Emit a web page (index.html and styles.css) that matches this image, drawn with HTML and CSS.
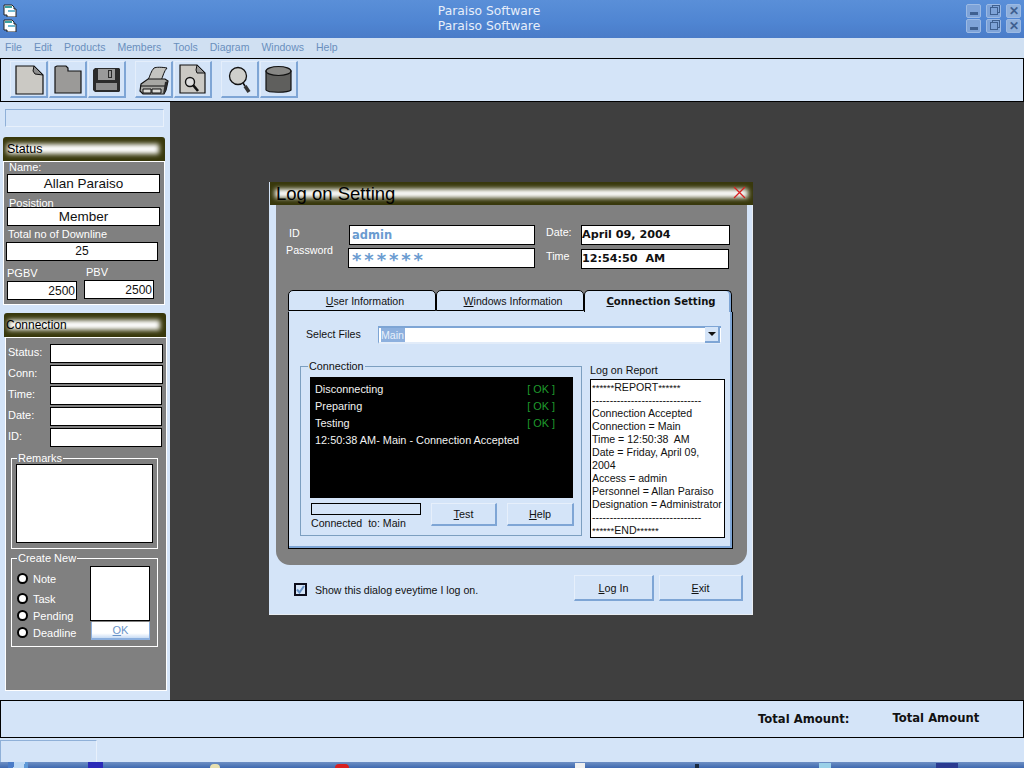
FILE: index.html
```html
<!DOCTYPE html>
<html lang="en">
<head>
  <meta charset="UTF-8" />
  <title>Paraiso Software</title>
  <link rel="stylesheet" href="styles.css">
</head>

<body>
  <!-- Title bars (main window + child window maximised) -->
  <div class="titlebars">
    <div class="titlebar">
      <svg class="app-icon" width="14" height="13" viewBox="0 0 14 13"><path d="M1 1h8l2 2v2h2v8H4v-2H1z" fill="#fff" stroke="#222"/><path d="M2 2h7v2H2z" fill="#3aa0a0"/><path d="M5 6h7v2H5z" fill="#70b8d0"/></svg>
      <span class="titlebar-text">Paraiso Software</span>
      <span class="win-btn"><span class="glyph-min"></span></span>
      <span class="win-btn"><span class="glyph-max"></span></span>
      <span class="win-btn glyph-close">✕</span>
    </div>
    <div class="titlebar">
      <svg class="app-icon" width="14" height="13" viewBox="0 0 14 13"><path d="M1 1h8l2 2v2h2v8H4v-2H1z" fill="#fff" stroke="#222"/><path d="M2 2h7v2H2z" fill="#3aa0a0"/><path d="M5 6h7v2H5z" fill="#70b8d0"/></svg>
      <span class="titlebar-text">Paraiso Software</span>
      <span class="win-btn"><span class="glyph-min"></span></span>
      <span class="win-btn"><span class="glyph-max"></span></span>
      <span class="win-btn glyph-close">✕</span>
    </div>
  </div>

  <div class="menubar">
    <span>File</span><span>Edit</span><span>Products</span><span>Members</span><span>Tools</span><span>Diagram</span><span>Windows</span><span>Help</span>
  </div>

  <div class="toolbar">
    <div class="tool">
      <svg width="38" height="35" viewBox="0 0 38 35"><path d="M6 5h18l9 9v19H6z" fill="#cbc9c4" stroke="#111" stroke-width="1.2"/><path d="M24 5l-1 5 2 3 8 1z" fill="#8d8d8d" stroke="#111"/></svg>
    </div>
    <div class="tool">
      <svg width="38" height="35" viewBox="0 0 38 35"><path d="M6 32V6l2-1h9l2 2v3h13v22z" fill="#9b9a98" stroke="#111" stroke-width="1.2"/></svg>
    </div>
    <div class="tool">
      <svg width="38" height="35" viewBox="0 0 38 35"><path d="M7 7h24l1 1v22l-1 1H7l-2-2V9z" fill="#2b2b2b"/><path d="M10 8h17v11H10z" fill="#9a9a9a"/><path d="M20 9h4v8h-4z" fill="#2b2b2b"/><path d="M21 10h2v6h-2z" fill="#9a9a9a"/><path d="M8 22h21v7H8z" fill="#8f8f8f"/></svg>
    </div>
    <div class="tool tool-sep">
      <svg width="38" height="35" viewBox="0 0 38 35"><path d="M13 19c2-4 3-9 6-12 2-1 8-1 13 0-3 3-4 8-6 13z" fill="#c4c4c0" stroke="#111"/><path d="M6 23l7-5h17l3 2-2 9-2 4H8l-3-3z" fill="#a8a8a4" stroke="#111" stroke-width="1.2"/><path d="M5 25h26M8 28h8v4H8zM17 28h9v4h-9z" fill="#dcdcd8" stroke="#111"/><path d="M30 21l3-1-2 9-3 4z" fill="#2b2b2b"/></svg>
    </div>
    <div class="tool">
      <svg width="38" height="35" viewBox="0 0 38 35"><path d="M6 4h17l8 8v20H6z" fill="#cbc9c4" stroke="#111" stroke-width="1.2"/><path d="M23 4l-1 5 1 3 8 0z" fill="#9a9a9a" stroke="#111"/><circle cx="16" cy="21" r="4.5" fill="#dedede" stroke="#111" stroke-width="1.4"/><path d="M19 24l5 6" stroke="#111" stroke-width="2.6"/></svg>
    </div>
    <div class="tool tool-sep">
      <svg width="38" height="35" viewBox="0 0 38 35"><circle cx="17" cy="15" r="8.5" fill="#cfcfcb" stroke="#111" stroke-width="1.3"/><path d="M22 22l2 3" stroke="#111" stroke-width="1.6"/><path d="M24 25l4 6" stroke="#333" stroke-width="3.6"/></svg>
    </div>
    <div class="tool">
      <svg width="38" height="35" viewBox="0 0 38 35"><path d="M6 10v19c2 3 22 3 25 0V10z" fill="#5f5f5d" stroke="#111" stroke-width="1.2"/><ellipse cx="18.5" cy="10" rx="12.5" ry="4.5" fill="#878785" stroke="#111" stroke-width="1.2"/></svg>
    </div>
  </div>

  <div class="main">
    <aside class="sidebar">
      <div class="side-search"></div>

      <div class="cap status-cap"><span>Status</span></div>
      <div class="side-panel status-panel">
        <div class="lbl name-lbl">Name:</div>
        <div class="field name-field">Allan Paraiso</div>
        <div class="lbl pos-lbl">Posistion</div>
        <div class="field pos-field">Member</div>
        <div class="lbl down-lbl">Total no of Downline</div>
        <div class="field down-field">25</div>
        <div class="bv-row">
          <div class="bv-col">
            <div class="lbl">PGBV</div>
            <div class="field bv-field">2500</div>
          </div>
          <div class="bv-col bv-col-2">
            <div class="lbl">PBV</div>
            <div class="field bv-field">2500</div>
          </div>
        </div>
      </div>

      <div class="cap conn-cap"><span>Connection</span></div>
      <div class="side-panel conn-panel">
        <div class="conn-rows">
          <div class="conn-row"><span>Status:</span><div class="field"></div></div>
          <div class="conn-row"><span>Conn:</span><div class="field"></div></div>
          <div class="conn-row"><span>Time:</span><div class="field narrow"></div></div>
          <div class="conn-row"><span>Date:</span><div class="field narrow"></div></div>
          <div class="conn-row"><span>ID:</span><div class="field narrow"></div></div>
        </div>
        <fieldset class="side-group remarks">
          <legend>Remarks</legend>
          <div class="remarks-box"></div>
        </fieldset>
        <fieldset class="side-group create">
          <legend>Create New</legend>
          <div class="create-inner">
            <div class="radios">
              <div class="radio-row"><span class="radio"></span>Note</div>
              <div class="radio-row"><span class="radio"></span>Task</div>
              <div class="radio-row"><span class="radio"></span>Pending</div>
              <div class="radio-row"><span class="radio"></span>Deadline</div>
            </div>
            <div class="create-right">
              <div class="create-box"></div>
              <div class="ok-btn"><u>O</u>K</div>
            </div>
          </div>
        </fieldset>
      </div>
    </aside>

    <div class="workspace">
      <!-- Log on dialog floats on the MDI workspace -->
      <div class="dialog">
        <div class="cap dialog-cap">
          <span>Log on Setting</span>
          <svg class="dialog-x" width="13" height="13" viewBox="0 0 13 13"><path d="M1 1l11 11M12 1L1 12" stroke="#d82020" stroke-width="1.3" fill="none"/></svg>
        </div>
        <div class="dialog-grey">
          <div class="login-row">
            <div class="login-labels">
              <div class="id-lbl">ID</div>
              <div>Password</div>
            </div>
            <div class="login-fields">
              <div class="field login-field">admin</div>
              <div class="field login-field pass-field">******</div>
            </div>
            <div class="date-labels">
              <div>Date:</div>
              <div class="time-lbl">Time</div>
            </div>
            <div class="date-fields">
              <div class="field date-field">April 09, 2004</div>
              <div class="field date-field time-field">12:54:50&nbsp; AM</div>
            </div>
          </div>

          <div class="tabs">
            <div class="tab"><u>U</u>ser Information</div>
            <div class="tab"><u>W</u>indows Information</div>
            <div class="tab active"><u>C</u>onnection Setting</div>
          </div>
          <div class="tab-panel">
            <div class="select-row">
              <span class="select-lbl">Select Files</span>
              <div class="combo"><span class="combo-sel">Main</span><span class="combo-arrow"></span></div>
            </div>
            <div class="lower">
              <fieldset class="conn-group">
                <legend>Connection</legend>
                <div class="console">
                  <div class="console-line"><span>Disconnecting</span><span class="ok">[ OK ]</span></div>
                  <div class="console-line"><span>Preparing</span><span class="ok">[ OK ]</span></div>
                  <div class="console-line"><span>Testing</span><span class="ok">[ OK ]</span></div>
                  <div class="console-line"><span>12:50:38 AM- Main - Connection Accepted</span></div>
                </div>
                <div class="conn-foot">
                  <div class="progress-col">
                    <div class="progress"></div>
                    <div class="progress-text">Connected&nbsp; to: Main</div>
                  </div>
                  <div class="btn test-btn"><span><u>T</u>est</span></div>
                  <div class="btn help-btn"><span><u>H</u>elp</span></div>
                </div>
              </fieldset>
              <div class="report-col">
                <div class="report-lbl">Log on Report</div>
                <div class="report">
                  <div><small>******</small>REPORT<small>******</small></div>
                  <div>-------------------------------</div>
                  <div>Connection Accepted</div>
                  <div>Connection = Main</div>
                  <div>Time = 12:50:38&nbsp; AM</div>
                  <div>Date = Friday, April 09, 2004</div>
                  <div>Access = admin</div>
                  <div>Personnel = Allan Paraiso</div>
                  <div>Designation = Administrator</div>
                  <div>-------------------------------</div>
                  <div><small>******</small>END<small>******</small></div>
                </div>
              </div>
            </div>
          </div>
        </div>
        <div class="dialog-foot">
          <span class="check"><svg width="9" height="9" viewBox="0 0 9 9"><path d="M1 4.5l2.5 3 4.5-6.5" fill="none" stroke="#6a94c8" stroke-width="2"/></svg></span>
          <span class="check-text">Show this dialog eveytime I log on.</span>
          <div class="btn login-btn"><span><u>L</u>og In</span></div>
          <div class="btn exit-btn"><span><u>E</u>xit</span></div>
        </div>
      </div>
    </div>
  </div>

  <div class="statusbar">
    <span class="total-lbl">Total Amount:</span>
    <span class="total-val">Total Amount</span>
  </div>

  <div class="bottom-strip"><div class="strip-box"></div></div>

  <!-- Only the top few pixels of the task bar are in view -->
  <div class="taskbar">
    <span class="start"></span>
    <span class="tray t1"></span>
    <span class="tray t2"></span>
    <span class="tray t3"></span>
    <span class="tray t4"></span>
    <span class="tray t5"></span>
    <span class="tray t6"></span>
    <span class="tray t7"></span>
  </div>
</body>
</html>
```

FILE: styles.css
```css
* {
  box-sizing: border-box;
}
body {
  margin: 0;
  width: 1024px;
  height: 768px;
  overflow: hidden;
  font-family: "Liberation Sans", Arial, sans-serif;
  font-size: 12px;
  color: #111;
  background: #d4e4f8;
}

/* title bars */
.titlebars {
  height: 38px;
  padding-top: 3px;
  background: linear-gradient(#5a8fd8, #4f85d2 60%, #4a7cc8);
}
.titlebar {
  display: flex;
  align-items: center;
  height: 15px;
  padding-left: 3px;
  padding-right: 3px;
}
.app-icon {
  flex: none;
}
.titlebar-text {
  flex: 1;
  text-align: center;
  font-family: "DejaVu Sans", sans-serif;
  font-size: 12.3px;
  color: #e6eefa;
}
.win-btn {
  display: flex;
  align-items: center;
  justify-content: center;
  width: 15px;
  height: 14px;
  margin-left: 5px;
  background: #7ea3d8;
  border: 1px solid #9cbae4;
  border-radius: 2px;
  color: #3f6090;
  font-size: 12px;
  font-weight: bold;
}
.glyph-min {
  width: 8px;
  height: 3px;
  margin-top: 6px;
  background: #3f6090;
}
.glyph-max {
  width: 8px;
  height: 8px;
  border: 1px solid #3f6090;
  box-shadow: 2px -2px 0 -1px #7ea3d8, 2px -2px 0 0 #3f6090;
}
.glyph-close {
  background: #8fb0dc;
}

/* menu + toolbar */
.menubar {
  display: flex;
  gap: 12px;
  height: 20px;
  padding: 2px 0 0 5px;
  font-size: 10.5px;
  line-height: 14px;
  color: #6a8fbd;
  background: #d0e0f2;
}
.toolbar {
  display: flex;
  height: 44px;
  padding: 2px 0 0 9px;
  gap: 1px;
  background: #d4e4f8;
  border: 1px solid #000;
}
.tool {
  width: 38px;
  height: 37px;
  border-right: 2px solid #7ea5d5;
  border-bottom: 2px solid #7ea5d5;
  border-top: 1px solid #e4eefb;
  border-left: 1px solid #e4eefb;
}
.tool svg {
  display: block;
  margin: -1px 0 0 -1px;
}
.tool-sep {
  margin-left: 8px;
}

/* main area */
.main {
  display: flex;
  height: 598px;
}
.sidebar {
  width: 170px;
  flex: none;
  padding: 7px 0 0 3px;
  background: #d4e4f8;
}
.side-search {
  width: 159px;
  height: 18px;
  margin-left: 2px;
  border-top: 1px solid #8fb0d8;
  border-left: 1px solid #8fb0d8;
  border-right: 1px solid #e8f0fb;
  border-bottom: 1px solid #e8f0fb;
}
.workspace {
  flex: 1;
  position: relative;
  background: #3f3f3f;
}

/* olive caption with the white glow in the middle */
.cap {
  position: relative;
  display: flex;
  align-items: center;
  background: #38380c;
  color: #000;
  border-radius: 3px 3px 0 0;
}
.cap::before {
  content: "";
  position: absolute;
  top: 7px;
  bottom: 7px;
  left: 4px;
  right: 6px;
  background: #fff;
  filter: blur(2.5px);
}
.cap span,
.cap svg {
  position: relative;
}
.status-cap {
  width: 162px;
  height: 24px;
  margin-top: 10px;
  padding-left: 4px;
  font-size: 12.5px;
}
.conn-cap {
  width: 162px;
  height: 24px;
  margin: 8px 0 0 1px;
  padding-left: 2px;
  font-size: 12px;
}
.side-panel {
  background: #808080;
  border: 1px solid #fff;
  color: #fff;
  font-size: 11px;
}
.status-panel {
  width: 162px;
  height: 144px;
}
.lbl {
  height: 12px;
  line-height: 12px;
  margin-left: 5px;
}
.name-lbl {
  line-height: 10px;
}
.field {
  height: 19px;
  background: #fff;
  border: 1px solid #000;
  color: #111;
}
.name-field,
.pos-field,
.down-field {
  margin-left: 3px;
  width: 153px;
  text-align: center;
  font-size: 13.5px;
  line-height: 17px;
}
.pos-lbl {
  margin-top: 4px;
}
.pos-field {
  margin-top: -2px;
}
.down-lbl {
  margin-top: 2px;
  margin-left: 4px;
}
.down-field {
  margin: 2px 0 0 2px;
  width: 152px;
  font-size: 12px;
}
.bv-row {
  display: flex;
  margin-top: 5px;
}
.bv-col {
  width: 70px;
  margin-left: 3px;
}
.bv-col .lbl {
  margin: 0 0 3px 0;
  line-height: 14px;
}
.bv-col-2 {
  margin-left: 7px;
  margin-top: -1px;
}
.bv-col-2 .lbl {
  margin-left: 2px;
}
.bv-field {
  text-align: right;
  padding-right: 1px;
  font-size: 12px;
  line-height: 18px;
}

/* connection panel */
.conn-panel {
  width: 162px;
  height: 354px;
  margin-left: 2px;
}
.conn-rows {
  display: flex;
  flex-direction: column;
  gap: 2px;
  padding: 6px 0 0 2px;
}
.conn-row {
  display: flex;
  align-items: center;
  font-size: 11px;
}
.conn-row span {
  width: 42px;
  margin-top: -3px;
}
.conn-row .field {
  width: 113px;
}
.conn-row .field.narrow {
  width: 112px;
}
.side-group {
  width: 147px;
  margin: 5px 0 0 5px;
  padding: 0 0 5px 4px;
  border: 1px solid #fff;
}
.side-group legend {
  height: 12px;
  padding: 0 1px;
  margin-left: 1px;
  line-height: 12px;
  font-size: 11px;
}
.remarks-box {
  width: 137px;
  height: 79px;
  background: #fff;
  border: 1px solid #000;
}
.create {
  height: 95px;
  margin-top: 3px;
}
.create-inner {
  display: flex;
}
.radios {
  width: 74px;
  font-size: 11px;
}
.radio-row {
  display: flex;
  align-items: center;
  gap: 5px;
  height: 14px;
  margin: 3px 0 0 1px;
}
.radio-row:first-child {
  margin-top: 8px;
}
.radio-row:nth-child(2) {
  margin-top: 6px;
}
.radio {
  width: 11px;
  height: 11px;
  margin-top: -2px;
  background: #fff;
  border: 2px solid #000;
  border-radius: 50%;
}
.create-right {
  margin-top: 2px;
}
.create-box {
  width: 60px;
  height: 55px;
  background: #fff;
  border: 1px solid #000;
}
.ok-btn {
  width: 59px;
  height: 18px;
  margin: 1px 0 0 1px;
  text-align: center;
  line-height: 17px;
  font-size: 11px;
  color: #6a94c8;
  background: linear-gradient(#fff, #fff 70%, #c8dcf4);
  border-bottom: 2px solid #8db0de;
  border-right: 1px solid #8db0de;
  border-left: 1px solid #8db0de;
}

/* log on dialog */
.dialog {
  position: absolute;
  left: 99px;
  top: 80px;
  width: 484px;
  height: 433px;
  background: #d4e4f8;
  border-bottom: 1px solid #e8edf2;
  border-right: 1px solid #e8edf2;
}
.dialog-cap {
  width: 483px;
  height: 23px;
  margin-left: 1px;
  padding: 0 7px 0 6px;
  font-size: 18.5px;
  border-radius: 0;
}
.dialog-cap::before {
  left: 5px;
  right: 5px;
  top: 7px;
  bottom: 7px;
}
.dialog-cap span {
  flex: 1;
}
.dialog-x {
  margin-top: -3px;
}
.dialog-grey {
  width: 471px;
  height: 360px;
  margin-left: 7px;
  background: #808080;
  border-radius: 0 0 14px 14px;
  color: #fff;
  overflow: hidden;
}
.login-row {
  display: flex;
  padding: 20px 0 0 10px;
  font-size: 10.7px;
}
.login-labels {
  width: 63px;
  line-height: 16px;
}
.id-lbl {
  padding-left: 3px;
  margin-bottom: 1px;
}
.login-fields {
  width: 186px;
}
.login-field {
  height: 20px;
  font-family: "DejaVu Sans", sans-serif;
  font-weight: bold;
  font-size: 11.5px;
  line-height: 19px;
  color: #6a9bd0;
  padding-left: 2px;
}
.pass-field {
  margin: 3px 0 0 -1px;
  padding: 3px 0 0 3px;
  font-size: 18px;
  line-height: 15px;
  letter-spacing: 2.9px;
  white-space: nowrap;
}
.date-labels {
  width: 35px;
  margin-left: 11px;
  line-height: 14px;
}
.time-lbl {
  margin-top: 10px;
}
.date-fields {
  width: 149px;
}
.date-field {
  height: 20px;
  font-family: "DejaVu Sans", sans-serif;
  font-weight: bold;
  font-size: 11.2px;
  line-height: 17px;
  color: #111;
}
.time-field {
  width: 148px;
  margin-top: 4px;
}

/* tabs */
.tabs {
  display: flex;
  margin: 21px 0 0 12px;
  color: #111;
}
.tab {
  width: 148px;
  height: 21px;
  padding-left: 6px;
  background: #d4e4f8;
  border: 1px solid #000;
  border-radius: 5px 5px 0 0;
  text-align: center;
  line-height: 20px;
  font-size: 10.6px;
}
.tab.active {
  position: relative;
  height: 22px;
  margin-bottom: -1px;
  font-family: "DejaVu Sans", sans-serif;
  font-weight: bold;
  font-size: 10.1px;
  line-height: 22px;
  border-bottom: none;
  box-shadow: inset -2px 0 #7ea5d5;
}
.tab-panel {
  width: 445px;
  height: 238px;
  margin-left: 12px;
  background: #d4e4f8;
  border: 1px solid #000;
  border-top-color: transparent;
  box-shadow: inset -2px -2px 0 #7ea5d5;
  color: #111;
}
.select-row {
  display: flex;
  align-items: center;
  padding: 14px 0 0 17px;
  font-size: 10.6px;
}
.select-lbl {
  width: 72px;
  margin-top: -2px;
}
.combo {
  display: flex;
  align-items: center;
  justify-content: space-between;
  width: 343px;
  height: 18px;
  padding: 0 1px 0 2px;
  background: #fff;
  border-top: 2px solid #7ea5d5;
  border-left: 1px solid #7ea5d5;
  border-bottom: 2px solid #e2ecf9;
}
.combo-sel {
  width: 24px;
  height: 14px;
  line-height: 14px;
  background: #8db0de;
  color: #e8f0fb;
}
.combo-arrow {
  display: flex;
  align-items: center;
  justify-content: center;
  width: 15px;
  height: 16px;
  background: #d4e4f8;
  border-right: 2px solid #7ea5d5;
  border-bottom: 2px solid #7ea5d5;
}
.combo-arrow::after {
  content: "";
  border: 4px solid transparent;
  border-top: 4px solid #111;
  border-bottom: none;
}
.lower {
  display: flex;
  margin: 16px 0 0 11px;
}
.conn-group {
  width: 282px;
  min-width: 0;
  height: 176px;
  margin: 0;
  padding: 5px 8px 0 9px;
  border: 1px solid #7c9fc0;
}
.conn-group legend {
  height: 12px;
  padding: 0 1px;
  margin-left: -2px;
  line-height: 12px;
  font-size: 10.8px;
}
.console {
  width: 263px;
  height: 121px;
  padding: 4px 18px 0 5px;
  background: #000;
  color: #f2f2f2;
  font-size: 10.9px;
  line-height: 17px;
}
.console-line {
  display: flex;
  justify-content: space-between;
}
.ok {
  color: #1f9a2c;
}
.conn-foot {
  display: flex;
  margin-top: 5px;
}
.progress-col {
  width: 120px;
  margin-left: 1px;
  flex: none;
}
.progress {
  width: 110px;
  height: 12px;
  border: 1px solid #000;
}
.progress-text {
  margin-top: 1px;
  font-size: 10.6px;
  line-height: 14px;
}
.btn {
  display: flex;
  align-items: center;
  justify-content: center;
  height: 23px;
  flex: none;
  font-size: 10.8px;
  background: #d4e4f8;
  border-top: 1px solid #e6effb;
  border-left: 1px solid #e6effb;
  border-right: 2px solid #7ea5d5;
  border-bottom: 2px solid #7ea5d5;
}
.test-btn {
  width: 66px;
}
.help-btn {
  width: 67px;
  margin-left: 10px;
}
.report-col {
  width: 135px;
  margin: -1px 0 0 8px;
}
.report-lbl {
  height: 14px;
  font-size: 10.7px;
  line-height: 14px;
  margin-top: 4px;
}
.report {
  width: 135px;
  height: 159px;
  margin-top: 2px;
  padding: 1px 0 0 1px;
  background: #fff;
  border: 1px solid #000;
  font-size: 10.6px;
  line-height: 13px;
}
.report small {
  font-size: 9.5px;
  line-height: 0;
}

/* dialog footer */
.dialog-foot {
  display: flex;
  align-items: center;
  width: 471px;
  height: 46px;
  margin-left: 7px;
  padding: 0 4px 0 18px;
}
.check {
  display: flex;
  align-items: center;
  justify-content: center;
  width: 13px;
  height: 13px;
  margin-top: 2px;
  background: #d4e4f8;
  border: 2px solid #0c0c1a;
}
.check-text {
  flex: 1;
  margin: 3px 0 0 8px;
  font-size: 10.6px;
}
.login-btn {
  width: 80px;
  height: 26px;
}
.exit-btn {
  width: 84px;
  height: 26px;
  margin-left: 5px;
}

/* status bar */
.statusbar {
  display: flex;
  align-items: center;
  height: 38px;
  padding-bottom: 1px;
  background: #d4e4f8;
  border: 1px solid #000;
  font-family: "DejaVu Sans", sans-serif;
  font-weight: bold;
  font-size: 11.6px;
}
.total-lbl {
  margin-left: 757px;
}
.total-val {
  margin-left: 43px;
  margin-top: -2px;
}
.bottom-strip {
  height: 24px;
  padding-top: 2px;
  background: #d4e4f8;
}
.strip-box {
  width: 97px;
  height: 22px;
  border-top: 1px solid #8fb0d8;
  border-left: 1px solid #8fb0d8;
  border-right: 1px solid #e8f0fb;
}

/* task bar sliver */
.taskbar {
  display: flex;
  height: 6px;
  overflow: hidden;
  background: linear-gradient(#6d8fc4, #3f69b0);
}
.start {
  width: 20px;
  height: 6px;
  margin-left: 8px;
  background: linear-gradient(100deg, #4a7cc8 30%, #bcd8f4 30%, #bcd8f4 80%, #5f9ad8 80%);
}
.tray {
  height: 4px;
  align-self: flex-end;
}
.t1 {
  width: 15px;
  margin-left: 60px;
  background: #2a2ab8;
  height: 6px;
}
.t2 {
  width: 10px;
  margin-left: 107px;
  background: #e8e0b0;
  border-radius: 5px 5px 0 0;
}
.t3 {
  width: 14px;
  margin-left: 115px;
  background: #d82020;
  border-radius: 7px 7px 0 0;
}
.t4 {
  width: 10px;
  margin-left: 226px;
  background: #f0f0f0;
  height: 5px;
}
.t5 {
  width: 4px;
  margin-left: 110px;
  background: #1a2a40;
}
.t6 {
  width: 12px;
  margin-left: 120px;
  background: #9ad0e8;
  height: 5px;
}
.t7 {
  width: 22px;
  margin-left: 105px;
  background: #2a3a90;
  height: 5px;
}
```
